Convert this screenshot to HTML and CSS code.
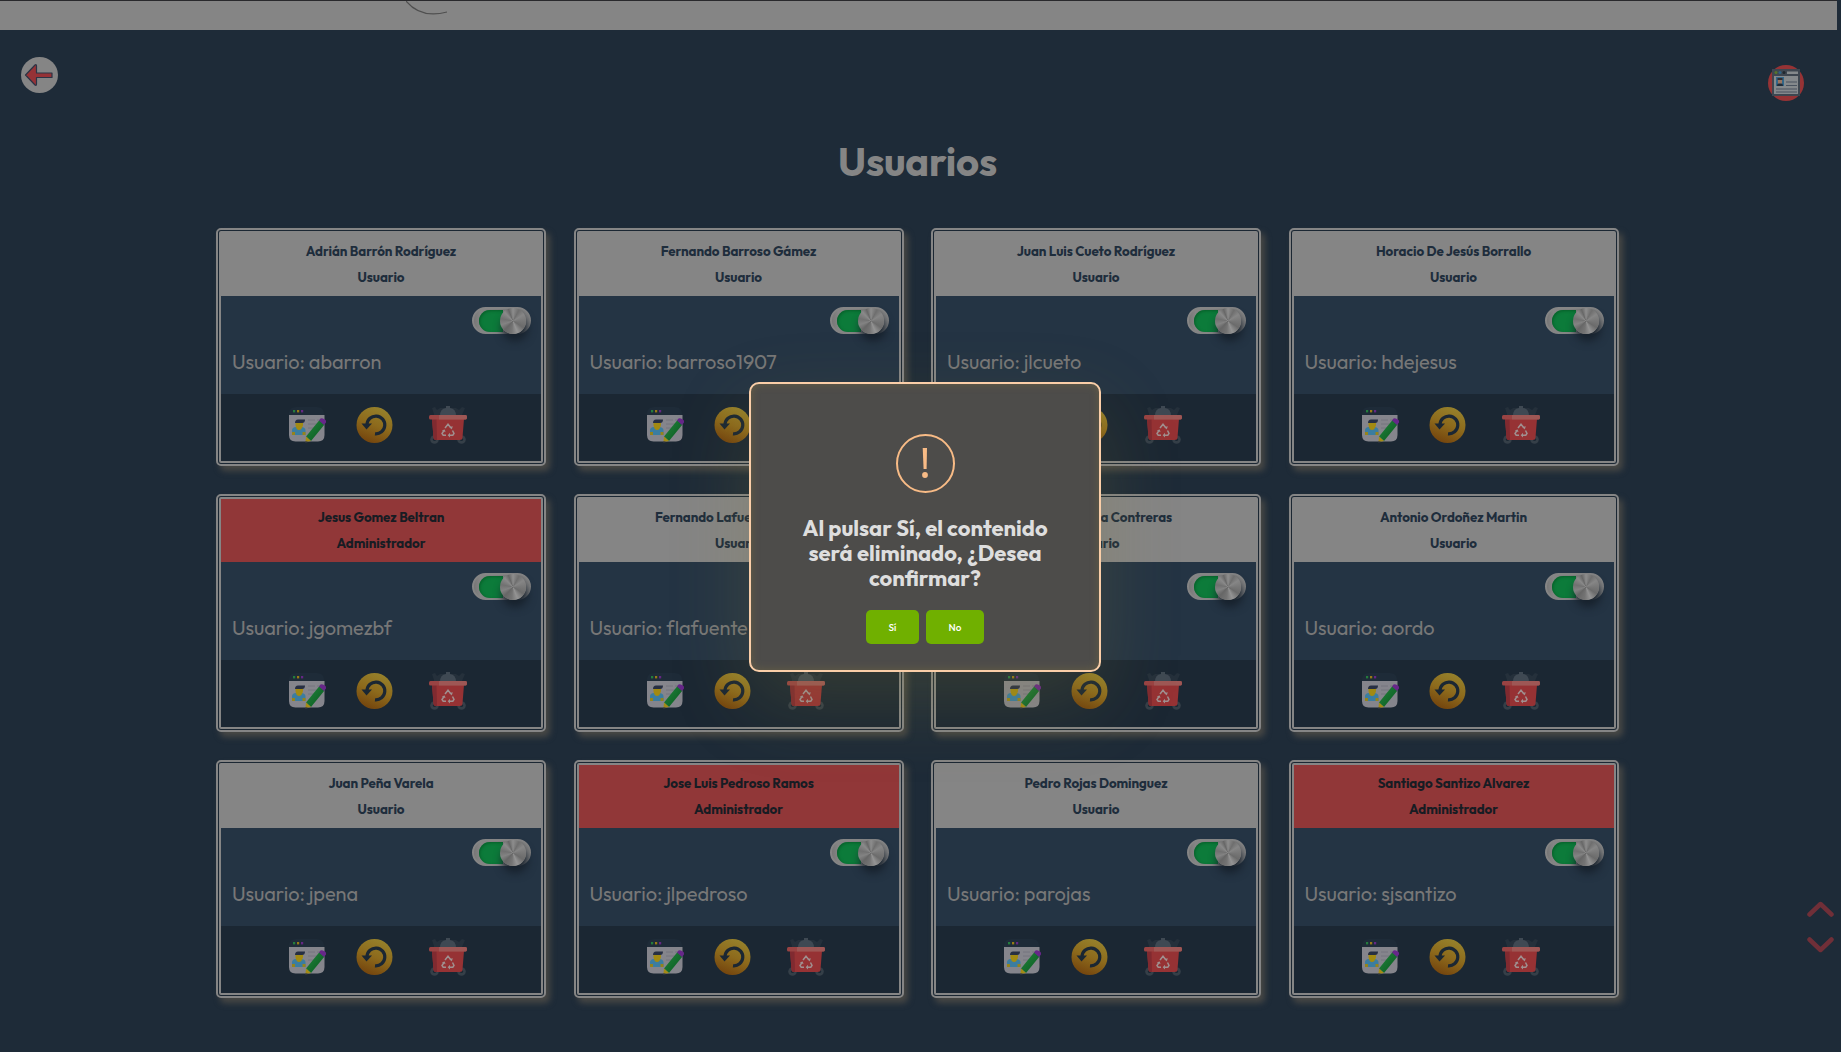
FILE: index.html
```html
<!DOCTYPE html>
<html lang="es">
<head>
<meta charset="utf-8">
<title>Usuarios</title>
<link rel="stylesheet" href="styles.css">
</head>
<body>
<svg class="sprite" aria-hidden="true">
  <defs>
    <linearGradient id="gold" x1=".7" y1="0" x2=".3" y2="1"><stop offset="0" stop-color="#96822c"/><stop offset=".5" stop-color="#8d6a1c"/><stop offset="1" stop-color="#73430d"/></linearGradient>
    <linearGradient id="pen" x1="0" y1="0" x2="1" y2="1"><stop offset="0" stop-color="#23843d"/><stop offset="1" stop-color="#08591f"/></linearGradient>
    <symbol id="edit" viewBox="0 0 38 38">
      <path d="M1 8q0-7 7-7h21q7 0 7 7v1H1z" fill="#1e2b38"/>
      <path d="M1 9h35.500v20q0 6.500-6.500 6.500H7.500Q1 35.500 1 29z" fill="#85858c"/>
      <rect x="5" y="4" width="2.200" height="2.400" fill="#237c3c"/><rect x="9" y="4" width="2.200" height="2.400" fill="#967a15"/><rect x="13" y="4" width="2.200" height="2.400" fill="#642784"/>
      <path d="M4 29v-4.500q0-3.500 4-3.500h5q4.500 0 4.500 3.500V29z" fill="#3b7da0"/><path d="M4 26h3v3H4zM14.500 26h3v3h-3z" fill="#94831c"/>
      <path d="M7.500 16h7.500v3q-1 5-4 5t-3.500-5z" fill="#a28a12"/><path d="M7 17q0-3.500 3-3.500h7q0 3.500-3 3.500z" fill="#272f43"/>
      <path d="M20 14h7M29 14h5M20 18h9M20 22h6" stroke="#74757e" stroke-width="1"/>
      <path d="M18 30.500 31.500 14l5 4.500L23 35z" fill="url(#pen)"/><path d="m31 14.500 1.500-2q1.500-.8 3.500.5 2.500 1.500 2.500 3L36 19z" fill="#672789"/><path d="m18 30.500-.5 5.500 5.500-1z" fill="#a48b15"/><path d="m17.500 35-.2 2 3-1z" fill="#343945"/>
    </symbol>
    <symbol id="undo" viewBox="0 0 38 38">
      <circle cx="19.500" cy="19" r="18" fill="url(#gold)"/>
      <path d="M12 18.500a8.900 8.900 0 1 1 8 9.300" fill="none" stroke="#1b2733" stroke-width="3.200"/><path d="M6.500 17.500H17l-5.500 6z" fill="#1b2733"/>
    </symbol>
    <symbol id="trash" viewBox="0 0 38 40">
      <path d="m3 3 3-1 2 3 3-2h16l3 2 3-3 3 1-3 7v4H5V9z" fill="#25303b"/>
      <path d="M11 11q0-7.500 6-8V1h4v2q6 .5 6 8v3H11z" fill="#3f4953"/>
      <circle cx="5.500" cy="34.500" r="4.300" fill="#353f48"/><circle cx="32.500" cy="34.500" r="4.300" fill="#353f48"/><circle cx="5.500" cy="34.500" r="1.600" fill="#1b2733"/><circle cx="32.500" cy="34.500" r="1.600" fill="#1b2733"/>
      <path d="M3 14h32l-1.500 18.500q0 2.500-3 2.500H7.500q-3 0-3-2.500z" fill="#963234"/><path d="M3 14h4.500L8 35h-.5q-3 0-3-2.500z" fill="#802a30"/>
      <rect y="10" width="38" height="4.500" rx="1.500" fill="#994343"/><path d="M10 14.500V10h26.500Q38 10 38 12t-1.500 2.500z" fill="#9e5755"/>
      <path d="m16 23 3-3.800 3 3.800M23.500 25.500l1.500 3-1.200 1.700h-3.300M17 30.200h-2.800L13 28.500l2-3" fill="none" stroke="#a09090" stroke-width="1.500"/><path d="m22.800 24.500 1-3.200-3.300.8zM21 27.800l-2.300 2.400 2.300 2.200zM12.800 25.200l3-.7.7 2.800z" fill="#a09090"/>
    </symbol>
  </defs>
</svg>
<div class="page">
  <header class="banner"><svg width="42" height="14" viewBox="0 0 42 14"><path d="M0 0Q15 18 41 11" fill="none" stroke="#4f4f4f" stroke-width="1.200"/></svg></header>
  <nav class="tools">
    <svg class="back" viewBox="0 0 37 36"><ellipse cx="18.500" cy="18" rx="18.500" ry="18" fill="#858585"/><path d="M4.500 18 14 8q1.500-1 1.500 1v7H31v4.500H15.500V27q0 2-1.500 1z" fill="#963236" stroke="#2c3445" stroke-width="1.200" stroke-linejoin="round"/></svg>
    <svg class="report" viewBox="0 0 36 36"><circle cx="18" cy="18" r="18" fill="#963335"/><path d="M4 4h28v27H4z" fill="#3e4650"/><rect x="6" y="11" width="24" height="18" fill="#85898c"/><circle cx="8" cy="7.500" r="1.500" fill="#55752a"/><circle cx="12" cy="7.500" r="1.500" fill="#2d6284"/><circle cx="16" cy="7.500" r="1.500" fill="#20282f"/><rect x="19" y="6.500" width="11" height="2.500" fill="#85898c"/><rect x="8" y="12" width="8" height="9" fill="#326688"/><path d="M9 21q0-3 3-3t3 3z" fill="#202b38"/><rect x="10" y="14" width="4" height="4.500" fill="#967561"/><path d="M9.500 13h5v2h-5z" fill="#332d30"/><path d="M18 17h11M18 20.500h11M8 24h21M8 27h21" stroke="#4a535f" stroke-width="1.200"/></svg>
  </nav>
  <h1>Usuarios</h1>
  <main class="grid" id="grid"></main>
  <div class="scroll">
    <svg viewBox="0 0 27 17"><path d="M2.500 13.500 13.500 3l11 10.500" /></svg>
    <svg viewBox="0 0 27 17"><path d="m2.500 3.500 11 10.500 11-10.500" /></svg>
  </div>
</div>
<section class="modal" role="dialog">
  <svg class="alert" viewBox="0 0 60 60"><circle cx="30.500" cy="30.500" r="28.500" fill="none" stroke="#f8bb86" stroke-width="2"/><path d="M27.700 15H32l-.4 21h-3z" fill="#f8bb86"/><circle cx="30" cy="42" r="2.900" fill="#f8bb86"/></svg>
  <h2>Al pulsar Sí, el contenido<br>será eliminado, ¿Desea<br>confirmar?</h2>
  <div class="actions"><button class="yes">Sí</button><button class="no">No</button></div>
</section>
<script src="app.js"></script>
</body>
</html>
```
FILE: styles.css
```css
* { box-sizing: border-box; }
body { margin: 0; height: 1052px; overflow: hidden; background: #1e2b38; font-family: Outfit, Lato, sans-serif; }
.sprite { position: absolute; width: 0; height: 0; }
.page { width: 1837px; }
.banner { height: 30px; background: #858585; border-top: 1px solid #29292c; padding-left: 406px; }
.banner svg { display: block; }
.tools { height: 75px; padding: 27px 33px 0 21px; display: flex; justify-content: space-between; }
.back { width: 37px; height: 36px; }
.report { width: 36px; height: 36px; margin-top: 8px; }
h1 { margin: 34px 0 0; padding-right: 2px; height: 44px; line-height: 44px; text-align: center; color: #858585; font-size: 40px; font-weight: 700; letter-spacing: -.2px; }
.name, .role, .login { white-space: nowrap; }
.grid { margin: 45px 0 0 216px; display: grid; grid-template-columns: repeat(4, 330px); column-gap: 27.500px; row-gap: 28px; }
.card { height: 238px; border: 5px double #858585; border-radius: 5px; background: #1b2733; box-shadow: 4px 5px 6px #484845; }
.card-head { height: 63px; background: #858585; color: #1e2d3c; text-align: center; font-size: 13.330px; font-weight: 700; letter-spacing: -.07px; line-height: 26px; padding-top: 5px; }
.card-head.admin { background: #913738; color: #171c23; }
.card-head div { height: 26px; }
.card-body { height: 98px; background: #243444; padding: 11px 10px 0 11px; display: flex; flex-direction: column; }
.switch { align-self: flex-end; width: 59px; height: 27px; border-radius: 14px; background: linear-gradient(90deg, #777, #858585 12%, #777 80%, #858585); border: 2px solid #858585; padding-left: 5px; display: flex; align-items: center; }
.track { width: 24px; height: 22px; border-radius: 11px 0 0 11px; background: #0c7b3a; box-shadow: inset 1px 1px 3px #075f29; }
.knob { flex: none; width: 26px; height: 26px; margin-left: -3px; border-radius: 50%; background: conic-gradient(#8d8d8d, #6e6e6e 8%, #868686 16%, #777 25%, #6b6b6b 34%, #949494 44%, #747474 52%, #666 62%, #838383 70%, #717171 78%, #8a8a8a 88%, #676767 94%, #8d8d8d); box-shadow: 2px 7px 9px #17212c; }
.login { margin-top: 14px; height: 28px; line-height: 28px; color: #777; font-size: 20px; letter-spacing: -.08px; }
.card-foot { height: 67px; display: flex; align-items: flex-start; padding: 12px 0 0 67px; }
.card-foot svg { width: 38px; height: 38px; }
.card-foot svg:nth-child(2) { margin-left: 29px; }
.card-foot svg:nth-child(3) { height: 40px; margin-left: 36px; margin-top: -1px; }
.scroll { position: absolute; left: 1807px; top: 901px; display: flex; flex-direction: column; gap: 18px; }
.scroll svg { width: 27px; height: 17px; fill: none; stroke: #702f38; stroke-width: 4.500; stroke-linecap: round; stroke-linejoin: round; }
.modal { position: absolute; left: 749px; top: 382px; width: 352px; height: 290px; border: 2px solid #facea8; border-radius: 10px; background: #4d4c4a; box-shadow: 0 30px 80px rgba(140, 130, 60, .24), inset 0 0 8px rgba(150, 130, 60, .35); display: flex; flex-direction: column; align-items: center; padding-top: 49px; }
.alert { width: 60px; height: 60px; }
.modal h2 { margin: 23px 0 0; height: 75px; line-height: 25px; font-size: 22px; font-weight: 700; color: #dedede; text-align: center; white-space: nowrap; }
.actions { margin-top: 19px; display: flex; gap: 7px; }
.actions button { height: 34px; padding: 0; border: 0; border-radius: 5px; background: #70b000; color: #fff; font: 500 10px Outfit, Lato, sans-serif; }
.yes { width: 53px; }
.no { width: 58px; }
```
FILE: app.js
```js
const users = [
  ["Adrián Barrón Rodríguez", "abarron"], ["Fernando Barroso Gámez", "barroso1907"],
  ["Juan Luis Cueto Rodríguez", "jlcueto"], ["Horacio De Jesús Borrallo", "hdejesus"],
  ["Jesus Gomez Beltran", "jgomezbf", true], ["Fernando Lafuente Herrera", "flafuente"],
  ["Manuel García Contreras", "mgarcia"], ["Antonio Ordoñez Martin", "aordo"],
  ["Juan Peña Varela", "jpena"], ["Jose Luis Pedroso Ramos", "jlpedroso", true],
  ["Pedro Rojas Dominguez", "parojas"], ["Santiago Santizo Alvarez", "sjsantizo", true]
];
document.getElementById("grid").innerHTML = users.map(([name, login, admin]) => `
  <article class="card">
    <div class="card-head${admin ? " admin" : ""}"><div><span class="name">${name}</span></div><div><span class="role">${admin ? "Administrador" : "Usuario"}</span></div></div>
    <div class="card-body"><div class="switch"><div class="track"></div><div class="knob"></div></div><div class="login"><span>Usuario: ${login}</span></div></div>
    <div class="card-foot"><svg><use href="#edit"/></svg><svg><use href="#undo"/></svg><svg><use href="#trash"/></svg></div>
  </article>`).join("");
```
